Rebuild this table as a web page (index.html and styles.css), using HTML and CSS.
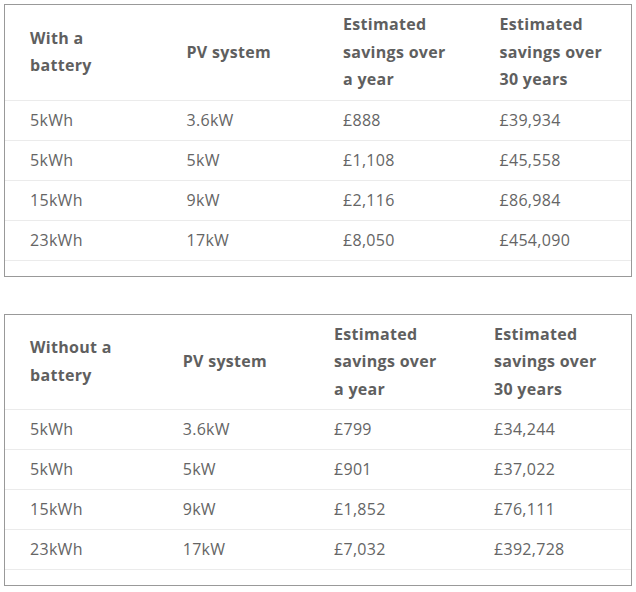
FILE: index.html
```html
<!DOCTYPE html>
<html lang="en">
<head>
<meta charset="utf-8">
<title>Battery savings</title>
<link rel="stylesheet" href="styles.css">
</head>
<body>
<div class="table-wrap">
  <table class="savings savings--with">
    <colgroup><col class="c1"><col class="c2"><col class="c3"><col class="c4"></colgroup>
    <thead>
      <tr>
        <th>With a<br>battery</th>
        <th>PV system</th>
        <th>Estimated<br>savings over<br>a year</th>
        <th>Estimated<br>savings over<br>30 years</th>
      </tr>
    </thead>
    <tbody>
      <tr><td>5kWh</td><td>3.6kW</td><td>£888</td><td>£39,934</td></tr>
      <tr><td>5kWh</td><td>5kW</td><td>£1,108</td><td>£45,558</td></tr>
      <tr><td>15kWh</td><td>9kW</td><td>£2,116</td><td>£86,984</td></tr>
      <tr><td>23kWh</td><td>17kW</td><td>£8,050</td><td>£454,090</td></tr>
    </tbody>
  </table>
</div>
<div class="table-wrap">
  <table class="savings savings--without">
    <colgroup><col class="c1"><col class="c2"><col class="c3"><col class="c4"></colgroup>
    <thead>
      <tr>
        <th>Without a<br>battery</th>
        <th>PV system</th>
        <th>Estimated<br>savings over<br>a year</th>
        <th>Estimated<br>savings over<br>30 years</th>
      </tr>
    </thead>
    <tbody>
      <tr><td>5kWh</td><td>3.6kW</td><td>£799</td><td>£34,244</td></tr>
      <tr><td>5kWh</td><td>5kW</td><td>£901</td><td>£37,022</td></tr>
      <tr><td>15kWh</td><td>9kW</td><td>£1,852</td><td>£76,111</td></tr>
      <tr><td>23kWh</td><td>17kW</td><td>£7,032</td><td>£392,728</td></tr>
    </tbody>
  </table>
</div>
</body>
</html>
```

FILE: styles.css
```css
html, body {
  margin: 0;
  padding: 0;
  background: #fff;
}
body {
  padding: 4px 4px 0 4px;
  font-family: "Open Sans", "DejaVu Sans", sans-serif;
  font-size: 16px;
  color: #656565;
}
.table-wrap {
  border: 1px solid #999;
  padding-bottom: 15px;
  margin-bottom: 37px;
  width: 626px;
}
.table-wrap:last-child {
  margin-bottom: 0;
}
.savings {
  width: 626px;
  border-collapse: collapse;
  table-layout: fixed;
}
.savings th,
.savings td {
  text-align: left;
  vertical-align: middle;
  padding: 6px 10px 6px 25px;
  border-bottom: 1px solid #ebebeb;
  letter-spacing: 0.3px;
}
.savings th {
  font-weight: 700;
  line-height: 27.5px;
  color: #5f5f5f;
}
.savings td {
  line-height: 27px;
  font-weight: 400;
}
.savings--with .c1, .savings--with .c2, .savings--with .c3, .savings--with .c4 { width: 156.5px; }
.savings--without .c1 { width: 152.7px; }
.savings--without .c2 { width: 151.3px; }
.savings--without .c3 { width: 160px; }
.savings--without .c4 { width: 162px; }
```
